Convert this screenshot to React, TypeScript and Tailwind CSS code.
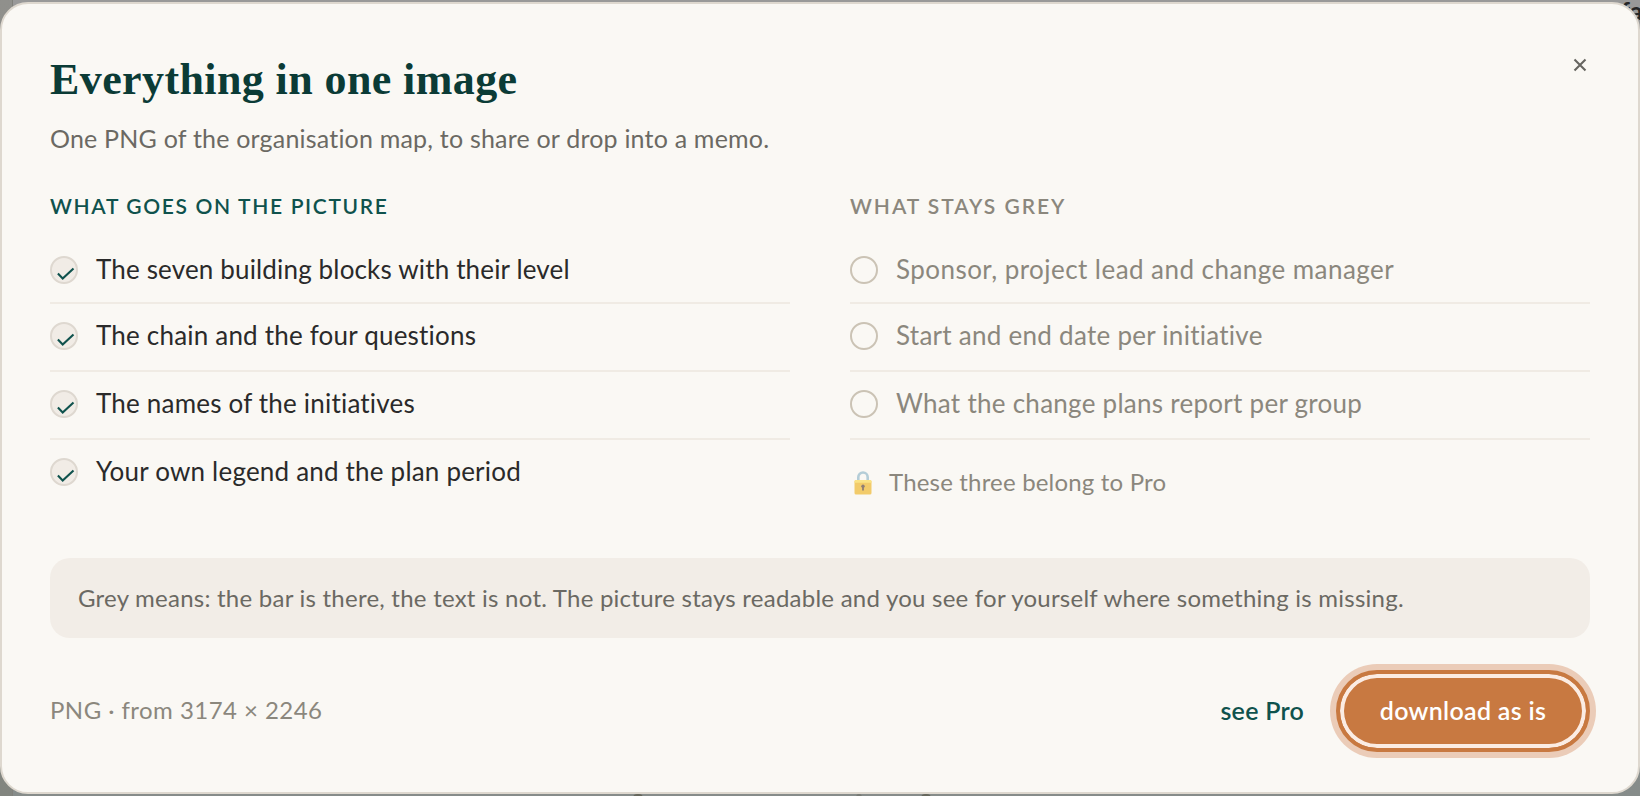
type Item = { text: string; tracking: string };

const included: Item[] = [
  { text: "The seven building blocks with their level", tracking: "tracking-[0.16px]" },
  { text: "The chain and the four questions", tracking: "tracking-[0.2px]" },
  { text: "The names of the initiatives", tracking: "tracking-[0.2px]" },
  { text: "Your own legend and the plan period", tracking: "tracking-[0.2px]" },
];

const locked: Item[] = [
  { text: "Sponsor, project lead and change manager", tracking: "tracking-[0.45px]" },
  { text: "Start and end date per initiative", tracking: "tracking-[0.27px]" },
  { text: "What the change plans report per group", tracking: "tracking-[0.27px]" },
];

function CheckMark() {
  return (
    <span className="size-7 shrink-0 rounded-full border-2 border-[#ded8d0] bg-[#f1ece6]">
      <svg viewBox="2 2 24 24" className="size-6" fill="none" stroke="#0f524d" strokeWidth="2.1">
        <path d="M7.9 17.6 12.7 22.5 23.5 12.4" />
      </svg>
    </span>
  );
}

function LockIcon() {
  return (
    <svg viewBox="0 0 18 24" className="h-6 w-[18px] opacity-75" fill="none">
      <path d="M4.3 11V6.2a4.7 4.7 0 0 1 9.4 0V11" stroke="#9dbfce" strokeWidth="2.6" />
      <rect x="0.5" y="9" width="17" height="14.5" rx="1.6" fill="#f0bd3c" />
      <path d="M.5 10.7C.5 9.7 1.200 9 2.100 9h13.800c.9 0 1.600.7 1.600 1.700v1H.5z" fill="#fadc61" />
      <circle cx="9" cy="15.2" r="1.7" fill="#6d5648" />
      <path d="M8.100 15h1.800v4.400H8.100z" fill="#6d5648" />
    </svg>
  );
}

/* page behind the dialog, only visible along the edges */
function Backdrop() {
  return (
    <div aria-hidden="true" className="absolute inset-0 flex overflow-hidden bg-linear-to-b from-[#999999] to-[#868c8a]">
      <div className="w-[13px] border-r border-[#80807b] bg-linear-to-b from-[#90908c] to-[#82857f]" />
      <span className="absolute top-[-5px] left-[1621px] text-[25px] leading-[30px] font-bold text-[#262626]">fa</span>
      <span className="absolute top-[794px] left-[633px] h-1 w-2.5 rounded-t-full bg-[#66675c]" />
      <span className="absolute top-[794px] left-[856px] h-1 w-1.5 rounded-t-full bg-[#777a74]" />
      <span className="absolute top-[794px] left-[921px] h-1 w-2.5 rounded-t-full bg-[#66675c]" />
    </div>
  );
}

export default function App() {
  return (
    <main className="relative h-[796px] w-[1640px] overflow-hidden py-0.5 font-['Lato','Liberation_Sans',sans-serif]">
      <Backdrop />

      <section className="relative h-[792px] rounded-[28px] border-2 border-[#ded8cf] bg-[#faf8f4] px-12 pt-[50px]">
        <header className="flex items-start justify-between">
          <div>
            <h1 className="font-['Liberation_Serif',serif] text-[44px] leading-[52px] font-bold tracking-[0.4px] text-[#0b3b36]">
              Everything in one image
            </h1>
            <p className="mt-[13px] text-[25px] leading-[38px] tracking-[0.2px] text-[#6b6963]">
              One PNG of the organisation map, to share or drop into a memo.
            </p>
          </div>
          <button type="button" aria-label="Close" className="mt-1 mr-[3px]">
            <svg viewBox="0 0 14 14" className="size-3.5" stroke="#666560" strokeWidth="2.1">
              <path d="m1.500 1.500 11 11M12.500 1.500l-11 11" />
            </svg>
          </button>
        </header>

        <div className="mt-9 grid h-[315px] grid-cols-2 gap-[60px]">
          <div>
            <h2 className="text-[21px] leading-[26px] font-semibold tracking-[1.65px] text-[#0f524d]">
              WHAT GOES ON THE PICTURE
            </h2>
            <ul className="mt-[19px] text-[26px] leading-[26px] text-[#2a2a2a]">
              {included.map((item) => (
                <li
                  key={item.text}
                  className="flex h-[68px] gap-[18px] border-b-2 border-[#f0ebe4] pt-[18px] first:h-[66px] last:border-0"
                >
                  <CheckMark />
                  <span className={item.tracking}>{item.text}</span>
                </li>
              ))}
            </ul>
          </div>

          <div>
            <h2 className="text-[21px] leading-[26px] font-semibold tracking-[1.95px] text-[#8b877d]">
              WHAT STAYS GREY
            </h2>
            <ul className="mt-[19px] text-[26px] leading-[26px] text-[#8b877d]">
              {locked.map((item) => (
                <li
                  key={item.text}
                  className="flex h-[68px] gap-[18px] border-b-2 border-[#f0ebe4] pt-[18px] first:h-[66px]"
                >
                  <span className="size-7 shrink-0 rounded-full border-2 border-[#cbc3b5]" />
                  <span className={item.tracking}>{item.text}</span>
                </li>
              ))}
            </ul>
            <p className="mt-7 flex items-center gap-[17px] pl-1 text-2xl leading-7 tracking-[0.18px] text-[#8b877d]">
              <span className="pt-0.5">
                <LockIcon />
              </span>
              These three belong to Pro
            </p>
          </div>
        </div>

        <p className="mt-[50px] flex h-20 items-center rounded-[20px] bg-[#f2ede7] px-7 text-2xl tracking-[0.24px] text-[#6b6963]">
          Grey means: the bar is there, the text is not. The picture stays readable and you see for yourself where something is missing.
        </p>

        <footer className="mt-8 flex items-center">
          <span className="pb-0.5 text-2xl tracking-[0.45px] text-[#8b877d]">PNG · from 3174 × 2246</span>
          <button type="button" className="mr-8 ml-auto text-[25px] font-semibold tracking-[0.25px] text-[#0f524d]">
            see Pro
          </button>
          <button
            type="button"
            className="h-[82px] w-[254px] rounded-full border-4 border-[#c87941] bg-[#c87941] text-[25px] font-semibold tracking-[0.3px] whitespace-nowrap text-white shadow-[0_0_0_6px_#ebccb8,inset_0_0_0_4px_#fbece3]"
          >
            download as is
          </button>
        </footer>
      </section>
    </main>
  );
}
